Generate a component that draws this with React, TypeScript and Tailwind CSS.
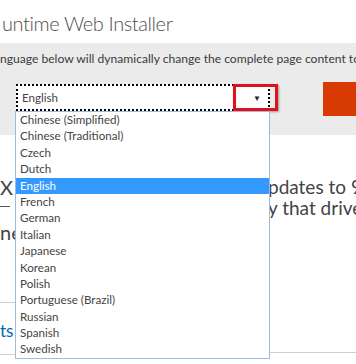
import React from 'react';

const languages = [
    'Chinese (Simplified)',
    'Chinese (Traditional)',
    'Czech',
    'Dutch',
    'English',
    'French',
    'German',
    'Italian',
    'Japanese',
    'Korean',
    'Polish',
    'Portuguese (Brazil)',
    'Russian',
    'Spanish',
    'Swedish',
];

const LanguageList: React.FC<{ selected: string }> = ({ selected }) => (
    <ul className="absolute left-[15px] top-[111px] w-[255px] border border-[#9fb9e0] bg-white">
        {languages.map(lang => (
            <li
                key={lang}
                className={
                    lang === selected
                        ? 'h-[16.4px] pl-[4px] text-[11.6px] leading-[16.4px] bg-[#3399ff] text-white'
                        : 'h-[16.4px] pl-[4px] text-[11.6px] leading-[16.4px] text-[#444]'
                }
            >
                {lang}
            </li>
        ))}
    </ul>
);

export default function App() {
    const selected = 'English';

    return (
        <div
            className="relative w-[356px] h-[364px] overflow-hidden bg-white text-[#333]"
            style={{ fontFamily: 'Lato, "Noto Sans", sans-serif' }}
        >
            {/* page title */}
            <div className="h-[43px] pl-[2px] pt-[10px]">
                <h1 className="text-[20px] leading-[26px] font-light tracking-[-0.4px] text-[#505050] whitespace-nowrap">untime Web Installer</h1>
            </div>

            {/* language band */}
            <div className="h-[92px] bg-[#ebebeb]">
                <p className="pt-[8px] text-[12.1px] leading-[16px] text-[#3a3a3a] whitespace-nowrap">
                    nguage below will dynamically change the complete page content to
                </p>
                <div className="flex items-start mt-[17px]">
                    <div className="ml-[16px] w-[254px] h-[27px] bg-white border-2 border-dotted border-black flex items-center justify-between pl-[4px] pr-[7px]">
                        <span className="text-[11.6px] text-[#444]">English</span>
                        <span className="text-[8px] text-[#222]">▼</span>
                    </div>
                    <div className="ml-auto mt-[-2px] w-[33px] h-[34px] bg-[#d83b01]" />
                </div>
            </div>

            {/* page content behind the open list */}
            <div className="flex text-[#444]">
                <div className="w-[15px] overflow-hidden">
                    <p className="mt-[40px] text-[20px] leading-[24px]">X</p>
                    <div className="mt-[7px] w-[10px] h-[1px] bg-[#555]" />
                    <p className="mt-[13px] text-[20px] leading-[24px] whitespace-nowrap">nes</p>
                    <div className="mt-[58px] border-t border-[#d0d0d0] h-[52px] pt-[4px] flex items-center">
                        <span className="text-[17px] text-[#0067b8] whitespace-nowrap">ts</span>
                    </div>
                    <div className="border-t border-[#d0d0d0]" />
                </div>
                <div className="flex-1" />
                <div className="w-[88px] overflow-hidden">
                    <p className="mt-[41px] text-[19px] leading-[21px] whitespace-nowrap">pdates to 9</p>
                    <p className="text-[19px] leading-[21px] whitespace-nowrap">y that drives</p>
                    <div className="mt-[134px] border-t border-[#d0d0d0] h-[41px]" />
                    <div className="border-t border-[#d0d0d0]" />
                </div>
            </div>

            {/* highlight around the dropdown arrow */}
            <div className="absolute left-[233px] top-[84px] w-[45px] h-[27px] border-[3px] border-[#e0111b] shadow-[1px_1px_2px_rgba(0,0,0,0.35)]" />

            <LanguageList selected={selected} />
        </div>
    );
}
